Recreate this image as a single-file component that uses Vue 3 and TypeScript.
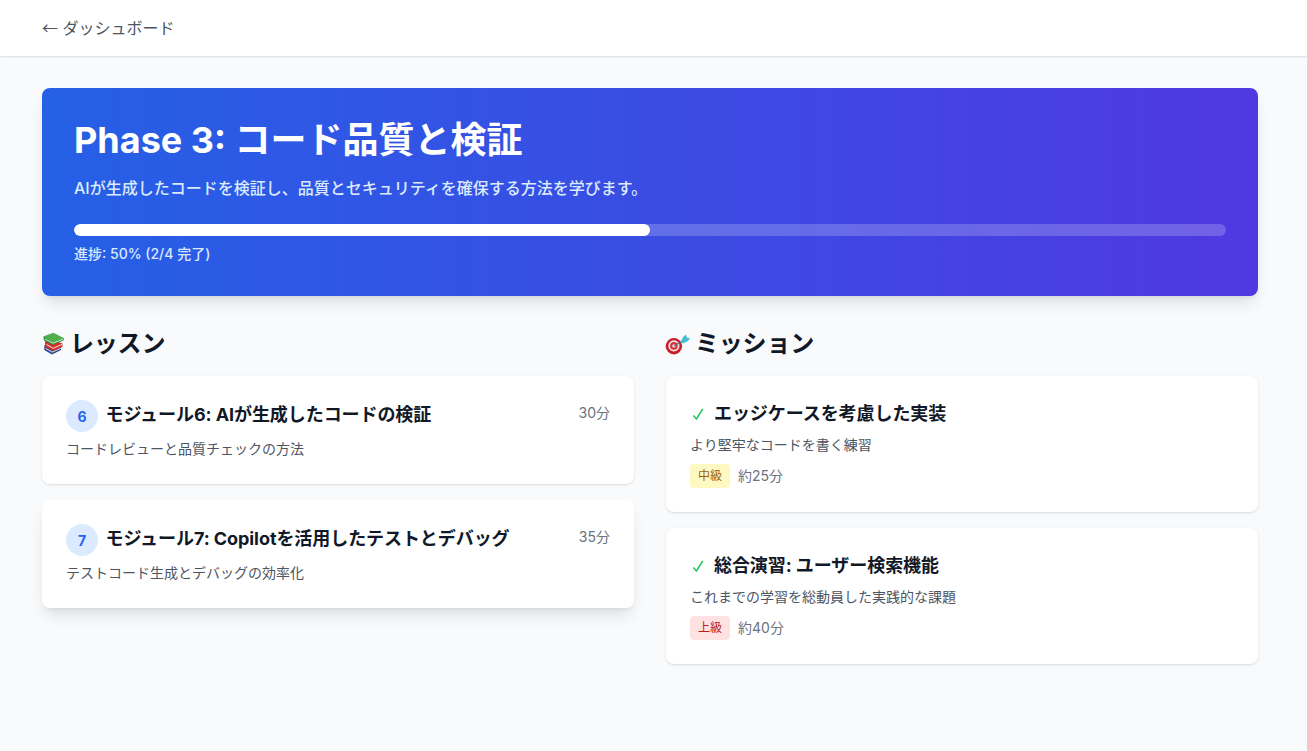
<script setup lang="ts">
interface Lesson {
  no: number
  title: string
  desc: string
  time: string
}

interface Mission {
  title: string
  desc: string
  level: string
  levelClass: string
  time: string
}

const lessons: Lesson[] = [
  { no: 6, title: 'モジュール6: AIが生成したコードの検証', desc: 'コードレビューと品質チェックの方法', time: '30分' },
  { no: 7, title: 'モジュール7: Copilotを活用したテストとデバッグ', desc: 'テストコード生成とデバッグの効率化', time: '35分' },
]

const missions: Mission[] = [
  { title: 'エッジケースを考慮した実装', desc: 'より堅牢なコードを書く練習', level: '中級', levelClass: 'mid', time: '約25分' },
  { title: '総合演習: ユーザー検索機能', desc: 'これまでの学習を総動員した実践的な課題', level: '上級', levelClass: 'high', time: '約40分' },
]

const progress = 50
</script>

<template>
  <div class="page">
    <header class="topbar">
      <a class="back"><span class="arrow">←</span> ダッシュボード</a>
    </header>

    <main class="content">
      <section class="hero">
        <h1>Phase 3: コード品質と検証</h1>
        <p class="lead">AIが生成したコードを検証し、品質とセキュリティを確保する方法を学びます。</p>
        <div class="track">
          <div class="fill" :style="{ width: `${progress}%` }"></div>
        </div>
        <p class="progress-text">進捗: 50% (2/4 完了)</p>
      </section>

      <div class="columns">
        <section>
          <h2>
            <svg class="emoji books" viewBox="2 3 23 24" aria-hidden="true">
              <path d="M4.3 16.5 9 14l12 3v4l-9 4.4-7.7-4.4z" fill="#2f4a8c" />
              <path d="M5.5 19.3l6.7 3.8 8.8-3.9" stroke="#d8dde8" stroke-width="1" fill="none" />
              <path d="M5 12.5 10 10l12.5 4.5v3.2L13 22 5 17.8z" fill="#d4302a" />
              <path d="M6.5 15.5l6.7 3.8 9-4" stroke="#f2e4dc" stroke-width="1" fill="none" />
              <path d="M3.5 7.5 13.5 4 24 9.5l-.5 2L12.5 16 4 11.5z" fill="#2f8f3c" />
              <path d="M3.5 7.5 13.5 4 24 9.5 13 13.5z" fill="#52b04c" />
              <path d="M5 10l8 4.2 10-4" stroke="#eef2e6" stroke-width=".9" fill="none" />
            </svg>
            レッスン
          </h2>
          <div class="stack">
            <article v-for="(lesson, i) in lessons" :key="lesson.no" class="card lesson" :class="{ raised: i === 1 }">
              <div class="lesson-head">
                <div class="lesson-title">
                  <span class="num">{{ lesson.no }}</span>
                  <h3>{{ lesson.title }}</h3>
                </div>
                <span class="time">{{ lesson.time }}</span>
              </div>
              <p class="desc">{{ lesson.desc }}</p>
            </article>
          </div>
        </section>

        <section>
          <h2>
            <svg class="emoji" viewBox="4 3 24 24" aria-hidden="true">
              <circle cx="11.9" cy="17.3" r="8.2" fill="#c81f2b" />
              <circle cx="11.9" cy="16.9" r="5.6" fill="#f5e6e4" />
              <circle cx="11.9" cy="16.9" r="3.8" fill="#d9303a" />
              <circle cx="11.9" cy="16.9" r="1.7" fill="#f5e6e4" />
              <path d="M12 16.9 21 11.5" stroke="#55707a" stroke-width="1.2" />
              <path d="M18.5 13 21.5 7.5 24 5.5l1 3.2 3 .3-2 3-5 2.5z" fill="#45bdd2" />
            </svg>
            ミッション
          </h2>
          <div class="stack">
            <article v-for="mission in missions" :key="mission.title" class="card mission">
              <div class="mission-title">
                <svg class="check" viewBox="0 0 16 16" aria-hidden="true">
                  <path d="M3.4 9.4 6.4 13 12.7 3" fill="none" stroke="#22c55e" stroke-width="1.5" />
                </svg>
                <h3>{{ mission.title }}</h3>
              </div>
              <p class="desc">{{ mission.desc }}</p>
              <div class="meta">
                <span class="badge" :class="mission.levelClass">{{ mission.level }}</span>
                <span class="meta-time">{{ mission.time }}</span>
              </div>
            </article>
          </div>
        </section>
      </div>
    </main>
  </div>
</template>

<style>
html,
body {
  margin: 0;
  background: #f9fafb;
}
</style>

<style scoped>
.page {
  min-height: 751px;
  background: #f9fafb;
  font-family: Inter, "Noto Sans CJK JP", sans-serif;
  color: #111827;
}

.topbar {
  height: 56px;
  background: #fff;
  padding-left: 42px;
  display: flex;
  align-items: center;
  box-shadow: 0 1px 2px rgba(0, 0, 0, 0.12);
}

.back {
  font-size: 16px;
  line-height: 24px;
  color: #4b5563;
}

.arrow {
  font-family: "Noto Sans CJK JP", sans-serif;
  line-height: 1;
}

.content {
  width: 1216px;
  padding: 32px 0 0 42px;
}

.hero {
  height: 208px;
  box-sizing: border-box;
  padding: 32px;
  border-radius: 8px;
  color: #fff;
  background: linear-gradient(to right, #2560e6, #4f39e0);
  box-shadow: 0 10px 15px -3px rgba(0, 0, 0, 0.1), 0 4px 6px -4px rgba(0, 0, 0, 0.1);
}

h1 {
  margin: 0;
  font-size: 36px;
  line-height: 40px;
  font-weight: 700;
}

.lead {
  margin: 16px 0 0;
  font-size: 16px;
  line-height: 24px;
  font-weight: 500;
  color: #dbeafe;
}

.track {
  margin-top: 24px;
  height: 12px;
  border-radius: 9999px;
  background: rgba(255, 255, 255, 0.2);
  overflow: hidden;
}

.fill {
  height: 100%;
  border-radius: 9999px;
  background: #fff;
}

.progress-text {
  margin: 8px 0 0;
  font-size: 14px;
  line-height: 20px;
  font-weight: 500;
  color: #dbeafe;
}

.columns {
  margin-top: 32px;
  display: grid;
  grid-template-columns: 592px 592px;
  gap: 32px;
}

h2 {
  margin: 0 0 16px;
  display: flex;
  align-items: center;
  gap: 5px;
  font-size: 24px;
  line-height: 32px;
  font-weight: 700;
  letter-spacing: -0.2px;
  color: #111827;
}

.emoji {
  width: 24px;
  height: 24px;
  flex: none;
  overflow: visible;
}

.emoji.books {
  width: 23px;
}

.stack {
  display: flex;
  flex-direction: column;
  gap: 16px;
}

.card {
  background: #fff;
  border-radius: 8px;
  padding: 24px;
  box-shadow: 0 1px 3px rgba(0, 0, 0, 0.1), 0 1px 2px -1px rgba(0, 0, 0, 0.1);
}

.card.raised {
  box-shadow: 0 10px 15px -3px rgba(0, 0, 0, 0.1), 0 4px 6px -4px rgba(0, 0, 0, 0.1);
}

.lesson {
  height: 108px;
  box-sizing: border-box;
}

.lesson-head {
  display: flex;
  justify-content: space-between;
  align-items: flex-start;
}

.lesson-title {
  display: flex;
  align-items: center;
  gap: 7.5px;
}

.lesson-title h3 {
  padding-bottom: 2px;
}

.num {
  width: 32px;
  height: 32px;
  border-radius: 50%;
  background: #dbeafe;
  color: #2563eb;
  font-size: 14px;
  font-weight: 700;
  display: flex;
  align-items: center;
  justify-content: center;
}

h3 {
  margin: 0;
  font-size: 18px;
  line-height: 28px;
  font-weight: 700;
  letter-spacing: -0.07px;
  color: #111827;
}

.time {
  font-size: 14px;
  line-height: 20px;
  margin-top: 3px;
  color: #6b7280;
}

.desc {
  margin: 7px 0 0;
  font-size: 14px;
  line-height: 20px;
  color: #4b5563;
}

.mission {
  height: 136px;
  box-sizing: border-box;
}

.mission-title {
  display: flex;
  align-items: center;
  gap: 8px;
}

.check {
  width: 16px;
  height: 16px;
  flex: none;
}

.meta {
  margin-top: 9px;
  display: flex;
  align-items: center;
  gap: 8px;
}

.badge {
  padding: 4px 8px;
  border-radius: 4px;
  font-size: 12px;
  line-height: 16px;
}

.badge.mid {
  background: #fef9c3;
  color: #a16207;
}

.badge.high {
  background: #fee2e2;
  color: #b91c1c;
}

.meta-time {
  font-size: 14px;
  line-height: 20px;
  color: #6b7280;
}
</style>
